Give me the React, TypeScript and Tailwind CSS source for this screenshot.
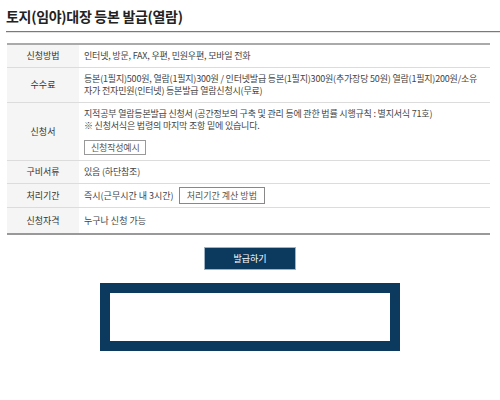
import React from "react";

const font = { fontFamily: '"Noto Sans CJK KR", "Noto Sans", sans-serif' };

function Row({ label, children, last }: { label: string; children: React.ReactNode; last?: boolean }) {
  return (
    <div className={`flex ${last ? "" : "border-b border-[#dcdcdc]"}`}>
      <div className="w-[72px] shrink-0 bg-[#f5f5f5] flex items-center justify-center text-[9px] leading-[12px] text-[#333]">
        {label}
      </div>
      <div className="flex-1 px-[5px] py-[5px] text-[9px] leading-[12px] text-[#444] tracking-[-0.2px]">{children}</div>
    </div>
  );
}

export default function App() {
  return (
    <div className="w-[500px] h-[400px] bg-white" style={font}>
      <div className="pl-[6px] pt-[6px]">
        <h1 className="text-[14px] leading-[20px] font-semibold text-[#222] tracking-[-0.3px]">
          토지(임야)대장 등본 발급(열람)
        </h1>
      </div>
      <div className="ml-[6px] mt-[5px] border-b border-[#7a7a7a]" />
      <div className="ml-[6px] border-b border-[#e2e2e2]" />

      <div className="ml-[7px] w-[483px] mt-[10px] border-t-2 border-b-2 border-t-[#aaaaaa] border-b-[#999999]">
        <Row label="신청방법">인터넷, 방문, FAX, 우편, 민원우편, 모바일 전화</Row>
        <Row label="수수료">
          등본(1필지)500원, 열람(1필지)300원 / 인터넷발급 등본(1필지)300원(추가장당 50원) 열람(1필지)200원/소유자가 전자민원(인터넷) 등본발급 열람신청시(무료)
        </Row>
        <Row label="신청서">
          <div>지적공부 열람등본발급 신청서 (공간정보의 구축 및 관리 등에 관한 법률 시행규칙 : 별지서식 71호)</div>
          <div>※ 신청서식은 법령의 마지막 조항 밑에 있습니다.</div>
          <div className="mt-[8px]">
            <span className="inline-block border border-[#999] px-[6px] h-[15px] leading-[13px] text-[#555]">신청작성예시</span>
          </div>
        </Row>
        <Row label="구비서류">있음 (하단참조)</Row>
        <div className="flex border-b border-[#dcdcdc]">
          <div className="w-[72px] shrink-0 bg-[#f5f5f5] flex items-center justify-center text-[9px] text-[#333]">처리기간</div>
          <div className="flex-1 px-[5px] py-[3px] flex items-center gap-[5px] text-[9px] text-[#444]">
            <span>즉시(근무시간 내 3시간)</span>
            <span className="inline-block border border-[#888] px-[7px] h-[17px] leading-[15px] text-[#555]">처리기간 계산 방법</span>
          </div>
        </div>
        <div className="flex">
          <div className="w-[72px] shrink-0 bg-[#f5f5f5] flex items-center justify-center text-[9px] text-[#333]">신청자격</div>
          <div className="flex-1 px-[5px] py-[6px] text-[9px] leading-[13px] text-[#444]">누구나 신청 가능</div>
        </div>
      </div>

      <div className="flex justify-center mt-[12px]">
        <button className="w-[92px] h-[23px] bg-[#0c3a5f] border border-[#9fb3c4] text-white text-[9px]">발급하기</button>
      </div>

      <div className="flex justify-center mt-[13px]">
        <div className="w-[300px] h-[68px] border-[10px] border-[#0b3a5e] bg-white" />
      </div>
    </div>
  );
}
